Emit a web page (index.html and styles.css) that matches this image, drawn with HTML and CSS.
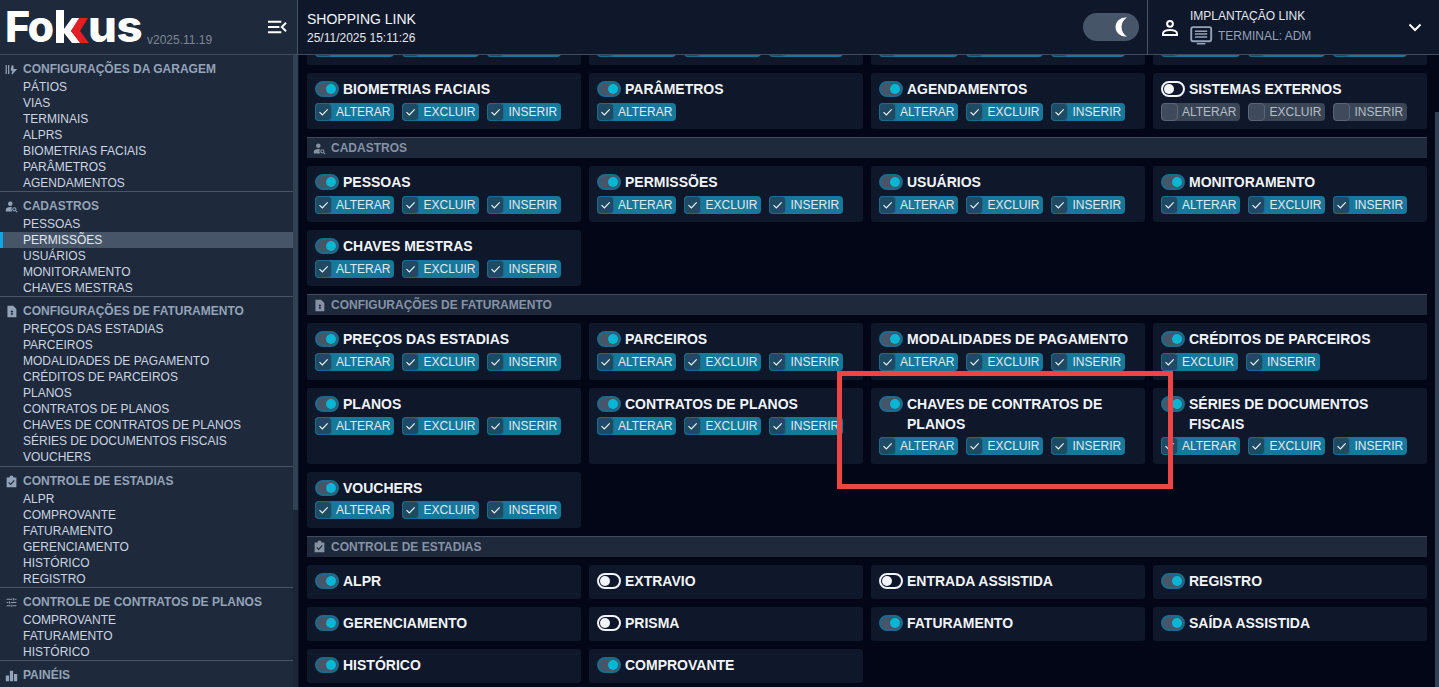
FILE: index.html
```html
<!DOCTYPE html>
<html lang="pt-BR">
<head>
<meta charset="utf-8">
<title>Fokus</title>
<link rel="stylesheet" href="styles.css">
</head>
<body>
<svg class="sprites" aria-hidden="true">
  <symbol id="ck" viewBox="0 0 17 18"><path d="M4 9.200l3.200 3.200 6-6.400" fill="none" stroke="currentColor" stroke-width="1.300"/></symbol>
  <symbol id="i-gar" viewBox="0 0 16 16"><path d="M1.500 2.500v11M4.500 2.500v11" fill="none" stroke="currentColor" stroke-width="1.500"/><path d="M8 3h2.500v4.500H15l-6 6.500-1-.5 1-4H7z" fill="currentColor"/></symbol>
  <symbol id="i-cad" viewBox="0 0 16 16"><circle cx="6.500" cy="4.500" r="2.800" fill="currentColor"/><path d="M1 14v-2c0-2 2.500-3.300 5.500-3.300 1 0 1.500.1 2 .3-.8 1.300-.8 3.500.5 5z" fill="currentColor"/><circle cx="11.500" cy="11.500" r="2" fill="none" stroke="currentColor" stroke-width="1.300"/><path d="M13 13l2 2" stroke="currentColor" stroke-width="1.300"/></symbol>
  <symbol id="i-fat" viewBox="0 0 16 16"><path d="M3 1h7l4 4v10H3z" fill="currentColor"/><path d="M8.500 6.500v6M7 8h3M7 11h3" stroke="#1e293b" stroke-width="1.100"/></symbol>
  <symbol id="i-est" viewBox="0 0 16 16"><path d="M2 3h3.500a2.500 2.500 0 0 1 5 0H14v12H2z" fill="currentColor"/><path d="M4.500 9l2.500 2.500 4.500-5" fill="none" stroke="#1e293b" stroke-width="1.400"/></symbol>
  <symbol id="i-con" viewBox="0 0 16 16"><path d="M2 4h7M12 4h2M2 8h2M7 8h7M2 12h5M10 12h4M10.500 2.500v3M5.500 6.500v3M8.500 10.500v3" fill="none" stroke="currentColor" stroke-width="1.200"/></symbol>
  <symbol id="i-pai" viewBox="0 0 16 16"><path d="M1 8h4v7H1zM6 2h4v13H6zM11 6h4v9h-4z" fill="currentColor"/></symbol>
</svg>

<header class="topbar">
  <div class="brand">
    <div class="logo" role="img" aria-label="Fokus">
      <span class="logo-text">Fo</span>
      <svg class="logo-k" viewBox="0 0 33 33"><path d="M0 0h8v33H0z" fill="#fff"/><path d="M8 19l8-11h8l-9 13 10 12h-9L8 23z" fill="#fff"/><path d="M23 8h9l-8 13 9 12h-9l-9-12z" fill="#e31e24"/></svg>
      <span class="logo-text logo-us">us</span>
    </div>
    <span class="version">v2025.11.19</span>
    <svg class="menu-btn" viewBox="0 0 20 14"><path d="M0 1.500h14M0 7h12M0 12.500h14M19 2.500L14.500 7l4.500 4.500" fill="none" stroke="#fff" stroke-width="2"/></svg>
  </div>
  <div class="client">
    <strong class="client-name">SHOPPING LINK</strong>
    <span class="client-date">25/11/2025 15:11:26</span>
  </div>
  <div class="theme"><svg class="moon" viewBox="0 0 15 20"><path d="M14 .5A10 9.600 0 1 0 14 19.500 11 11 0 0 1 14 .5z" fill="#fff"/></svg></div>
  <div class="user">
    <svg class="user-icon" viewBox="0 0 18 18"><circle cx="9" cy="4.800" r="2.900" fill="none" stroke="#fff" stroke-width="2"/><path d="M2 16v-1.500C2 12.500 5 11 9 11s7 1.500 7 3.500V16z" fill="none" stroke="#fff" stroke-width="2"/></svg>
    <div class="user-info">
      <span class="user-name">IMPLANTAÇÃO LINK</span>
      <span class="terminal">
        <svg class="term-icon" viewBox="0 0 24 20"><rect x="1.200" y="1.200" width="21" height="14.800" rx="2" fill="none" stroke="currentColor" stroke-width="2"/><path d="M5 5.500h13M5 8.500h13M5 11.500h13M7 18.700h9" stroke="currentColor" stroke-width="1.600"/></svg>
        TERMINAL: ADM
      </span>
    </div>
    <svg class="chev" viewBox="0 0 14 9"><path d="M1.500 1.500L7 7l5.500-5.500" fill="none" stroke="#fff" stroke-width="2"/></svg>
  </div>
</header>

<div class="body">
  <nav class="sidebar">
    <div class="nav-list">
      <section class="nav-group">
        <h3 class="nav-head"><svg class="nav-ic"><use href="#i-gar"/></svg>CONFIGURAÇÕES DA GARAGEM</h3>
        <a class="nav-item">PÁTIOS</a><a class="nav-item">VIAS</a><a class="nav-item">TERMINAIS</a><a class="nav-item">ALPRS</a><a class="nav-item">BIOMETRIAS FACIAIS</a><a class="nav-item">PARÂMETROS</a><a class="nav-item">AGENDAMENTOS</a>
      </section>
      <section class="nav-group">
        <h3 class="nav-head"><svg class="nav-ic"><use href="#i-cad"/></svg>CADASTROS</h3>
        <a class="nav-item">PESSOAS</a><a class="nav-item active">PERMISSÕES</a><a class="nav-item">USUÁRIOS</a><a class="nav-item">MONITORAMENTO</a><a class="nav-item">CHAVES MESTRAS</a>
      </section>
      <section class="nav-group nav-group-tall">
        <h3 class="nav-head"><svg class="nav-ic"><use href="#i-fat"/></svg>CONFIGURAÇÕES DE FATURAMENTO</h3>
        <a class="nav-item">PREÇOS DAS ESTADIAS</a><a class="nav-item">PARCEIROS</a><a class="nav-item">MODALIDADES DE PAGAMENTO</a><a class="nav-item">CRÉDITOS DE PARCEIROS</a><a class="nav-item">PLANOS</a><a class="nav-item">CONTRATOS DE PLANOS</a><a class="nav-item">CHAVES DE CONTRATOS DE PLANOS</a><a class="nav-item">SÉRIES DE DOCUMENTOS FISCAIS</a><a class="nav-item">VOUCHERS</a>
      </section>
      <section class="nav-group">
        <h3 class="nav-head"><svg class="nav-ic"><use href="#i-est"/></svg>CONTROLE DE ESTADIAS</h3>
        <a class="nav-item">ALPR</a><a class="nav-item">COMPROVANTE</a><a class="nav-item">FATURAMENTO</a><a class="nav-item">GERENCIAMENTO</a><a class="nav-item">HISTÓRICO</a><a class="nav-item">REGISTRO</a>
      </section>
      <section class="nav-group">
        <h3 class="nav-head"><svg class="nav-ic"><use href="#i-con"/></svg>CONTROLE DE CONTRATOS DE PLANOS</h3>
        <a class="nav-item">COMPROVANTE</a><a class="nav-item">FATURAMENTO</a><a class="nav-item">HISTÓRICO</a>
      </section>
      <section class="nav-group">
        <h3 class="nav-head"><svg class="nav-ic"><use href="#i-pai"/></svg>PAINÉIS</h3>
      </section>
    </div>
    <div class="nav-scroll"><div class="nav-thumb"></div></div>
  </nav>

  <main class="main">
    <div class="content">
      <div class="grid">
        <article class="card"><h4 class="title"><i class="tg on"></i>ALPRS</h4><div class="perms"><label class="pm"><svg class="ck"><use href="#ck"/></svg>ALTERAR</label><label class="pm"><svg class="ck"><use href="#ck"/></svg>EXCLUIR</label><label class="pm"><svg class="ck"><use href="#ck"/></svg>INSERIR</label></div></article>
        <article class="card"><h4 class="title"><i class="tg on"></i>VIAS</h4><div class="perms"><label class="pm"><svg class="ck"><use href="#ck"/></svg>ALTERAR</label><label class="pm"><svg class="ck"><use href="#ck"/></svg>EXCLUIR</label><label class="pm"><svg class="ck"><use href="#ck"/></svg>INSERIR</label></div></article>
        <article class="card"><h4 class="title"><i class="tg on"></i>TERMINAIS</h4><div class="perms"><label class="pm"><svg class="ck"><use href="#ck"/></svg>ALTERAR</label><label class="pm"><svg class="ck"><use href="#ck"/></svg>EXCLUIR</label><label class="pm"><svg class="ck"><use href="#ck"/></svg>INSERIR</label></div></article>
        <article class="card"><h4 class="title"><i class="tg on"></i>PÁTIOS</h4><div class="perms"><label class="pm"><svg class="ck"><use href="#ck"/></svg>ALTERAR</label><label class="pm"><svg class="ck"><use href="#ck"/></svg>EXCLUIR</label><label class="pm"><svg class="ck"><use href="#ck"/></svg>INSERIR</label></div></article>

        <article class="card"><h4 class="title"><i class="tg on"></i>BIOMETRIAS FACIAIS</h4><div class="perms"><label class="pm"><svg class="ck"><use href="#ck"/></svg>ALTERAR</label><label class="pm"><svg class="ck"><use href="#ck"/></svg>EXCLUIR</label><label class="pm"><svg class="ck"><use href="#ck"/></svg>INSERIR</label></div></article>
        <article class="card"><h4 class="title"><i class="tg on"></i>PARÂMETROS</h4><div class="perms"><label class="pm"><svg class="ck"><use href="#ck"/></svg>ALTERAR</label></div></article>
        <article class="card"><h4 class="title"><i class="tg on"></i>AGENDAMENTOS</h4><div class="perms"><label class="pm"><svg class="ck"><use href="#ck"/></svg>ALTERAR</label><label class="pm"><svg class="ck"><use href="#ck"/></svg>EXCLUIR</label><label class="pm"><svg class="ck"><use href="#ck"/></svg>INSERIR</label></div></article>
        <article class="card"><h4 class="title"><i class="tg"></i>SISTEMAS EXTERNOS</h4><div class="perms"><label class="pm off"><span class="ck"></span>ALTERAR</label><label class="pm off"><span class="ck"></span>EXCLUIR</label><label class="pm off"><span class="ck"></span>INSERIR</label></div></article>
      </div>

      <h2 class="sec"><svg class="sec-ic"><use href="#i-cad"/></svg>CADASTROS</h2>
      <div class="grid">
        <article class="card"><h4 class="title"><i class="tg on"></i>PESSOAS</h4><div class="perms"><label class="pm"><svg class="ck"><use href="#ck"/></svg>ALTERAR</label><label class="pm"><svg class="ck"><use href="#ck"/></svg>EXCLUIR</label><label class="pm"><svg class="ck"><use href="#ck"/></svg>INSERIR</label></div></article>
        <article class="card"><h4 class="title"><i class="tg on"></i>PERMISSÕES</h4><div class="perms"><label class="pm"><svg class="ck"><use href="#ck"/></svg>ALTERAR</label><label class="pm"><svg class="ck"><use href="#ck"/></svg>EXCLUIR</label><label class="pm"><svg class="ck"><use href="#ck"/></svg>INSERIR</label></div></article>
        <article class="card"><h4 class="title"><i class="tg on"></i>USUÁRIOS</h4><div class="perms"><label class="pm"><svg class="ck"><use href="#ck"/></svg>ALTERAR</label><label class="pm"><svg class="ck"><use href="#ck"/></svg>EXCLUIR</label><label class="pm"><svg class="ck"><use href="#ck"/></svg>INSERIR</label></div></article>
        <article class="card"><h4 class="title"><i class="tg on"></i>MONITORAMENTO</h4><div class="perms"><label class="pm"><svg class="ck"><use href="#ck"/></svg>ALTERAR</label><label class="pm"><svg class="ck"><use href="#ck"/></svg>EXCLUIR</label><label class="pm"><svg class="ck"><use href="#ck"/></svg>INSERIR</label></div></article>
        <article class="card"><h4 class="title"><i class="tg on"></i>CHAVES MESTRAS</h4><div class="perms"><label class="pm"><svg class="ck"><use href="#ck"/></svg>ALTERAR</label><label class="pm"><svg class="ck"><use href="#ck"/></svg>EXCLUIR</label><label class="pm"><svg class="ck"><use href="#ck"/></svg>INSERIR</label></div></article>
      </div>

      <h2 class="sec"><svg class="sec-ic"><use href="#i-fat"/></svg>CONFIGURAÇÕES DE FATURAMENTO</h2>
      <div class="grid">
        <article class="card"><h4 class="title"><i class="tg on"></i>PREÇOS DAS ESTADIAS</h4><div class="perms"><label class="pm"><svg class="ck"><use href="#ck"/></svg>ALTERAR</label><label class="pm"><svg class="ck"><use href="#ck"/></svg>EXCLUIR</label><label class="pm"><svg class="ck"><use href="#ck"/></svg>INSERIR</label></div></article>
        <article class="card"><h4 class="title"><i class="tg on"></i>PARCEIROS</h4><div class="perms"><label class="pm"><svg class="ck"><use href="#ck"/></svg>ALTERAR</label><label class="pm"><svg class="ck"><use href="#ck"/></svg>EXCLUIR</label><label class="pm"><svg class="ck"><use href="#ck"/></svg>INSERIR</label></div></article>
        <article class="card"><h4 class="title"><i class="tg on"></i>MODALIDADES DE PAGAMENTO</h4><div class="perms"><label class="pm"><svg class="ck"><use href="#ck"/></svg>ALTERAR</label><label class="pm"><svg class="ck"><use href="#ck"/></svg>EXCLUIR</label><label class="pm"><svg class="ck"><use href="#ck"/></svg>INSERIR</label></div></article>
        <article class="card"><h4 class="title"><i class="tg on"></i>CRÉDITOS DE PARCEIROS</h4><div class="perms"><label class="pm"><svg class="ck"><use href="#ck"/></svg>EXCLUIR</label><label class="pm"><svg class="ck"><use href="#ck"/></svg>INSERIR</label></div></article>
        <article class="card"><h4 class="title"><i class="tg on"></i>PLANOS</h4><div class="perms"><label class="pm"><svg class="ck"><use href="#ck"/></svg>ALTERAR</label><label class="pm"><svg class="ck"><use href="#ck"/></svg>EXCLUIR</label><label class="pm"><svg class="ck"><use href="#ck"/></svg>INSERIR</label></div></article>
        <article class="card"><h4 class="title"><i class="tg on"></i>CONTRATOS DE PLANOS</h4><div class="perms"><label class="pm"><svg class="ck"><use href="#ck"/></svg>ALTERAR</label><label class="pm"><svg class="ck"><use href="#ck"/></svg>EXCLUIR</label><label class="pm"><svg class="ck"><use href="#ck"/></svg>INSERIR</label></div></article>
        <article class="card"><h4 class="title"><i class="tg on"></i>CHAVES DE CONTRATOS DE PLANOS</h4><div class="perms"><label class="pm"><svg class="ck"><use href="#ck"/></svg>ALTERAR</label><label class="pm"><svg class="ck"><use href="#ck"/></svg>EXCLUIR</label><label class="pm"><svg class="ck"><use href="#ck"/></svg>INSERIR</label></div></article>
        <article class="card"><h4 class="title"><i class="tg on"></i>SÉRIES DE DOCUMENTOS FISCAIS</h4><div class="perms"><label class="pm"><svg class="ck"><use href="#ck"/></svg>ALTERAR</label><label class="pm"><svg class="ck"><use href="#ck"/></svg>EXCLUIR</label><label class="pm"><svg class="ck"><use href="#ck"/></svg>INSERIR</label></div></article>
        <article class="card"><h4 class="title"><i class="tg on"></i>VOUCHERS</h4><div class="perms"><label class="pm"><svg class="ck"><use href="#ck"/></svg>ALTERAR</label><label class="pm"><svg class="ck"><use href="#ck"/></svg>EXCLUIR</label><label class="pm"><svg class="ck"><use href="#ck"/></svg>INSERIR</label></div></article>
      </div>

      <h2 class="sec"><svg class="sec-ic"><use href="#i-est"/></svg>CONTROLE DE ESTADIAS</h2>
      <div class="grid">
        <article class="card"><h4 class="title"><i class="tg on"></i>ALPR</h4></article>
        <article class="card"><h4 class="title"><i class="tg"></i>EXTRAVIO</h4></article>
        <article class="card"><h4 class="title"><i class="tg"></i>ENTRADA ASSISTIDA</h4></article>
        <article class="card"><h4 class="title"><i class="tg on"></i>REGISTRO</h4></article>
        <article class="card"><h4 class="title"><i class="tg on"></i>GERENCIAMENTO</h4></article>
        <article class="card"><h4 class="title"><i class="tg"></i>PRISMA</h4></article>
        <article class="card"><h4 class="title"><i class="tg on"></i>FATURAMENTO</h4></article>
        <article class="card"><h4 class="title"><i class="tg on"></i>SAÍDA ASSISTIDA</h4></article>
        <article class="card"><h4 class="title"><i class="tg on"></i>HISTÓRICO</h4></article>
        <article class="card"><h4 class="title"><i class="tg on"></i>COMPROVANTE</h4></article>
      </div>
    </div>
    <div class="highlight"></div>
    <div class="main-scroll"><div class="main-thumb"></div></div>
  </main>
</div>
</body>
</html>
```
FILE: styles.css
```css
* { box-sizing: border-box; }
html, body { margin: 0; height: 100%; overflow: hidden; }
body { width: 1439px; height: 687px; background: #020617; color: #e2e8f0; font-family: "Liberation Sans", Arial, sans-serif; font-size: 12px; display: flex; flex-direction: column; }
.sprites { position: absolute; width: 0; height: 0; }

.topbar { height: 55px; flex: none; display: flex; background: #0f172a; border-bottom: 1px solid #3f4c5f; position: relative; z-index: 2; }
.brand { width: 298px; flex: none; display: flex; align-items: flex-start; background: #1e293b; border-right: 1px solid #475569; padding: 7px 0 0 5px; position: relative; }
.logo { display: flex; align-items: flex-start; height: 38px; width: 138px; flex: none; }
.logo-text { font-family: Inter, "Liberation Sans", sans-serif; font-weight: 800; font-size: 43px; line-height: 38px; color: #fff; letter-spacing: -1.500px; }
.logo-k { width: 33px; height: 33px; margin: 3px 0 0 3px; flex: none; }
.logo-us { letter-spacing: -.500px; margin-left: -1px; transform: scaleX(1.060); transform-origin: left center; }
.version { font-size: 12px; color: #7c8796; margin: 26px 0 0 4px; }
.menu-btn { position: absolute; left: 268px; top: 20px; width: 19px; height: 14px; }

.client { padding: 12px 0 0 9px; display: flex; flex-direction: column; gap: 4px; flex: 1; }
.client-name { font-weight: 400; font-size: 14px; line-height: 15px; color: #f1f5f9; }
.client-date { font-size: 12px; line-height: 14px; color: #e2e8f0; }
.theme { width: 56px; height: 28px; margin: 13px 8px 0 0; background: #475569; border-radius: 14px; display: flex; justify-content: flex-end; align-items: center; padding-right: 11px; flex: none; }
.moon { width: 15px; height: 20px; }
.user { width: 292px; flex: none; border-left: 1px solid #475569; display: flex; align-items: flex-start; padding: 9px 0 0 13px; position: relative; }
.user-icon { width: 18px; height: 18px; margin-top: 10px; flex: none; }
.user-info { margin-left: 11px; display: flex; flex-direction: column; gap: 3px; }
.user-name { font-size: 12px; line-height: 14px; color: #e2e8f0; }
.terminal { display: flex; align-items: center; gap: 5px; color: #94a3b8; line-height: 18px; }
.term-icon { width: 23px; height: 19px; }
.chev { position: absolute; left: 260px; top: 23px; width: 14px; height: 9px; }

.body { flex: 1; display: flex; min-height: 0; }
.sidebar { width: 298px; flex: none; background: #1e293b; display: flex; position: relative; overflow: hidden; }
.nav-list { width: 293px; flex: none; }
.nav-group { border-bottom: 1px solid #475569; padding: 5px 0 0; }
.nav-group:last-child { border-bottom: 0; }
.nav-group-tall { padding-bottom: 1px; }
.nav-head { margin: 0 0 1px; height: 18px; line-height: 18px; font-size: 12px; font-weight: 700; color: #94a3b8; display: flex; align-items: center; padding-left: 5px; }
.nav-ic { width: 13px; height: 13px; margin-right: 5px; flex: none; }
.nav-item { display: block; height: 16px; line-height: 16px; padding-left: 23px; color: #cbd5e1; }
.nav-item.active { background: #475569; box-shadow: inset 3px 0 0 #0ea5e9; color: #e2e8f0; }
.nav-scroll { width: 5px; flex: none; background: #1b2535; }
.nav-thumb { width: 5px; height: 455px; background: #334155; }

.main { flex: 1; position: relative; overflow: hidden; border-left: 1px solid #0f172a; }
.content { padding: 0 12px 0 8px; margin-top: -46px; display: flex; flex-direction: column; gap: 8px; }
.grid { display: grid; grid-template-columns: repeat(4, 274px); gap: 8px; }
.card { background: #0f172a; border-radius: 3px; padding: 6px 8px 8.120px; }
.title { margin: 0; font-size: 14px; line-height: 20px; font-weight: 700; color: #f1f5f9; position: relative; padding-left: 28px; }
.tg { position: absolute; left: 0; top: 2px; width: 24px; height: 16px; border: 2px solid #1b6b8c; border-radius: 8px; background: #475569; }
.tg::after { content: ""; position: absolute; right: 1px; top: 1px; width: 10px; height: 10px; border-radius: 50%; background: #06b6d4; }
.tg:not(.on) { background: #0f172a; border-color: #f1f5f9; }
.tg:not(.on)::after { right: auto; left: 1px; background: #f1f5f9; }
.perms { display: flex; gap: 8px; margin: 3.500px 0 .5px; }
.pm { height: 18px; display: flex; align-items: center; background: #16789a; border-radius: 4px; color: #e2e8f0; line-height: 18px; padding-right: 4px; }
.ck { width: 17px; height: 18px; margin-right: 4px; background: #1e4a63; border: 1px solid #1b6b8c; border-radius: 4px; color: #f1f5f9; flex: none; }
.pm.off { background: #3a4656; color: #b4bcc8; }
.pm.off .ck { background: #3f4b5c; border: 1px solid #5a6677; }
.sec { margin: 0; height: 21px; flex: none; display: flex; align-items: center; background: #1e293b; border-top: 1px solid #3f4c5f; font-size: 12px; font-weight: 700; color: #8592a6; padding-left: 6px; }
.sec-ic { width: 13px; height: 13px; margin-right: 5px; flex: none; }

.highlight { position: absolute; left: 538px; top: 316px; width: 336px; height: 118px; border: 5px solid #ef4444; }
.main-scroll { position: absolute; right: 0; top: 0; bottom: 0; width: 4px; background: #020617; }
.main-thumb { margin-top: 57px; height: 575px; background: #334155; }
```
